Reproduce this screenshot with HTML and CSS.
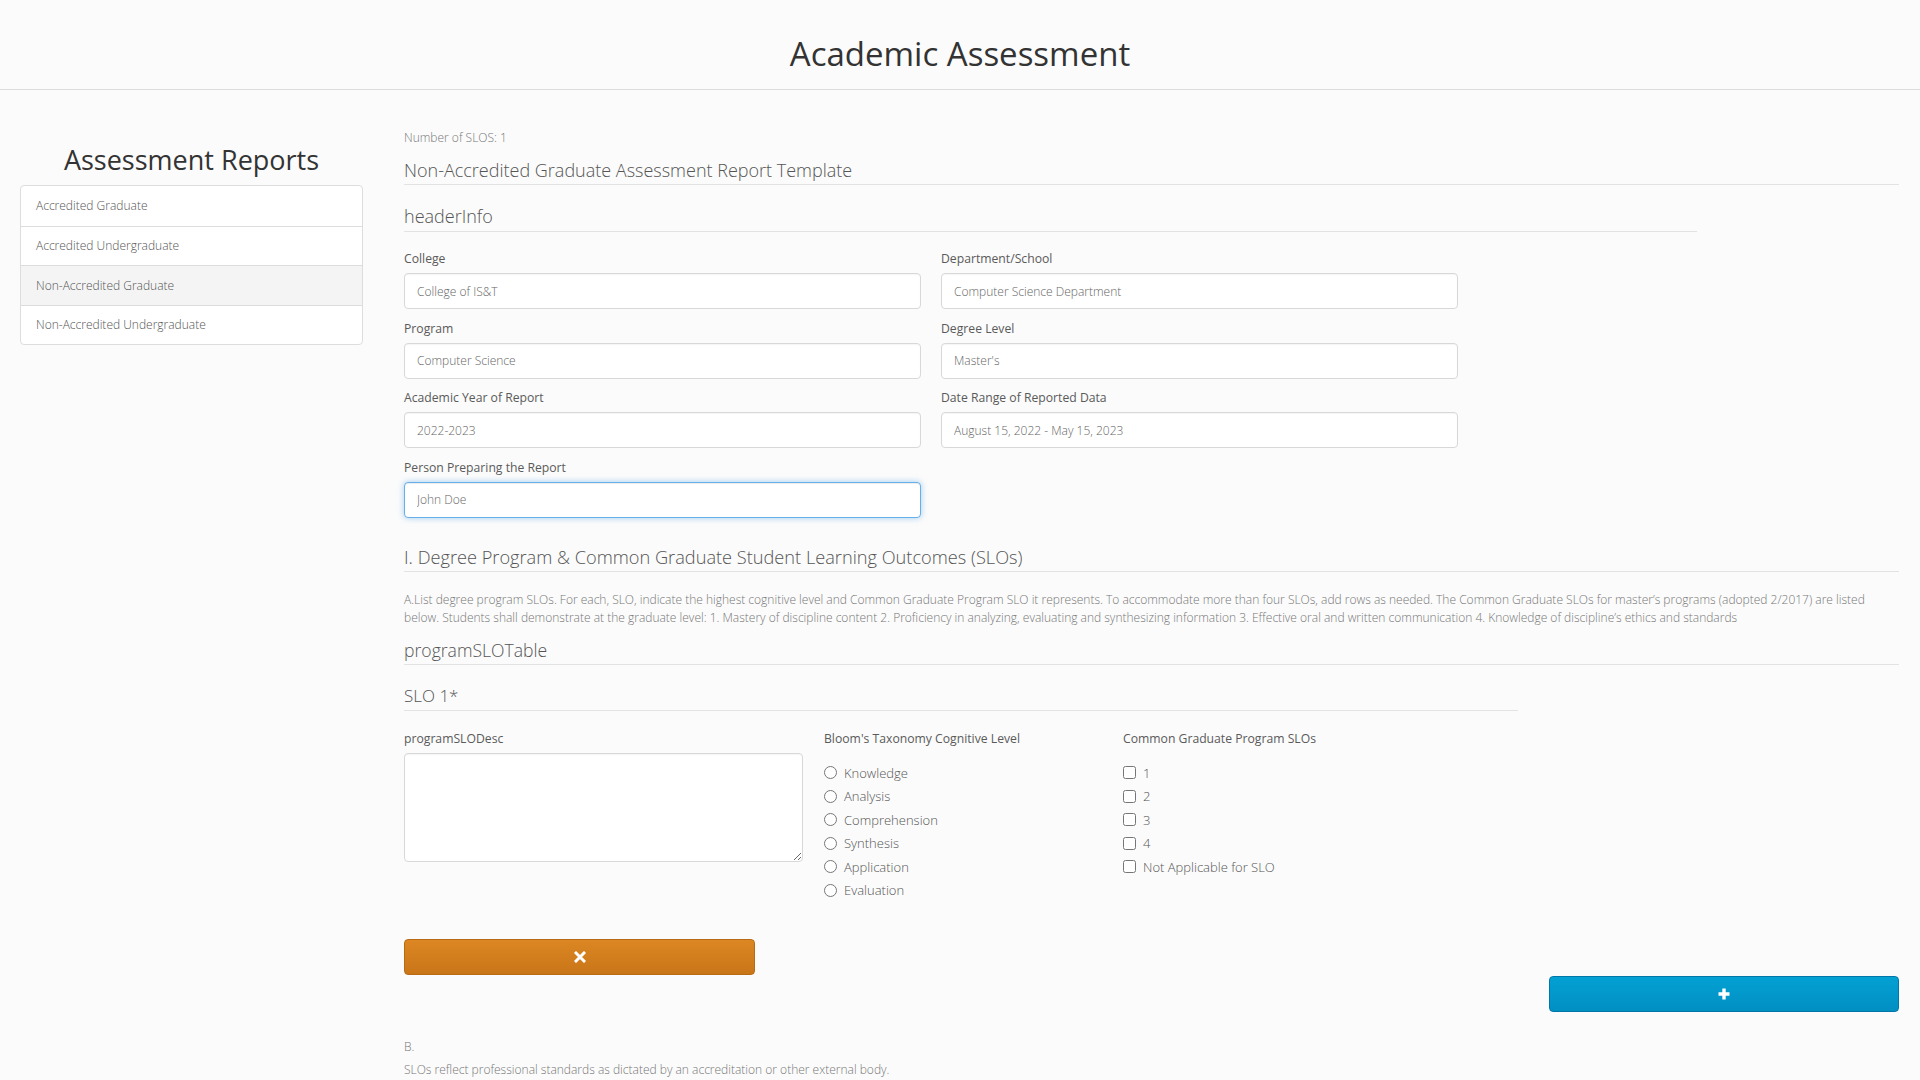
FILE: index.html
```html
<!DOCTYPE html>
<html lang="en">
<head>
<meta charset="utf-8">
<title>Academic Assessment</title>
<link rel="stylesheet" href="styles.css">
</head>
<body>
<header class="top-header">
  <h1 class="app-title">Academic Assessment</h1>
</header>
<div class="layout">
  <aside class="sidebar">
    <h2 class="sidebar-title">Assessment Reports</h2>
    <ul class="list-group">
      <li class="list-item">Accredited Graduate</li>
      <li class="list-item">Accredited Undergraduate</li>
      <li class="list-item active">Non-Accredited Graduate</li>
      <li class="list-item">Non-Accredited Undergraduate</li>
    </ul>
  </aside>
  <main class="main">
    <p class="slo-count">Number of SLOS: 1</p>
    <h3 class="section-title">Non-Accredited Graduate Assessment Report Template</h3>
    <section class="header-info">
      <h3 class="section-title sub">headerInfo</h3>
      <div class="form-grid">
        <div class="form-group">
          <label class="field-label">College</label>
          <input class="form-control" type="text" value="College of IS&amp;T">
        </div>
        <div class="form-group">
          <label class="field-label">Department/School</label>
          <input class="form-control" type="text" value="Computer Science Department">
        </div>
        <div class="form-group">
          <label class="field-label">Program</label>
          <input class="form-control" type="text" value="Computer Science">
        </div>
        <div class="form-group">
          <label class="field-label">Degree Level</label>
          <input class="form-control" type="text" value="Master's">
        </div>
        <div class="form-group">
          <label class="field-label">Academic Year of Report</label>
          <input class="form-control" type="text" value="2022-2023">
        </div>
        <div class="form-group">
          <label class="field-label">Date Range of Reported Data</label>
          <input class="form-control" type="text" value="August 15, 2022 - May 15, 2023">
        </div>
        <div class="form-group">
          <label class="field-label">Person Preparing the Report</label>
          <input class="form-control is-focus" type="text" value="John Doe">
        </div>
      </div>
    </section>

    <h3 class="section-title degree">I. Degree Program &amp; Common Graduate Student Learning Outcomes (SLOs)</h3>
    <p class="help-text">A.List degree program SLOs. For each, SLO, indicate the highest cognitive level and Common Graduate Program SLO it represents. To accommodate more than four SLOs, add rows as needed. The Common Graduate SLOs for master’s programs (adopted 2/2017) are listed below. Students shall demonstrate at the graduate level: 1. Mastery of discipline content 2. Proficiency in analyzing, evaluating and synthesizing information 3. Effective oral and written communication 4. Knowledge of discipline’s ethics and standards</p>

    <h3 class="section-title table-title">programSLOTable</h3>
    <section class="slo-block">
      <h3 class="section-title slo-title">SLO 1*</h3>
      <div class="slo-grid">
        <div class="slo-col">
          <label class="field-label">programSLODesc</label>
          <textarea class="form-control slo-desc"></textarea>
        </div>
        <div class="slo-col">
          <label class="field-label">Bloom's Taxonomy Cognitive Level</label>
          <div class="choice-list">
            <label class="choice"><input type="radio" name="bloom"> Knowledge</label>
            <label class="choice"><input type="radio" name="bloom"> Analysis</label>
            <label class="choice"><input type="radio" name="bloom"> Comprehension</label>
            <label class="choice"><input type="radio" name="bloom"> Synthesis</label>
            <label class="choice"><input type="radio" name="bloom"> Application</label>
            <label class="choice"><input type="radio" name="bloom"> Evaluation</label>
          </div>
        </div>
        <div class="slo-col">
          <label class="field-label">Common Graduate Program SLOs</label>
          <div class="choice-list">
            <label class="choice"><input type="checkbox"> 1</label>
            <label class="choice"><input type="checkbox"> 2</label>
            <label class="choice"><input type="checkbox"> 3</label>
            <label class="choice"><input type="checkbox"> 4</label>
            <label class="choice"><input type="checkbox"> Not Applicable for SLO</label>
          </div>
        </div>
      </div>
      <button class="btn btn-remove" type="button" aria-label="Remove">
        <svg width="12" height="12" viewBox="0 0 12 12"><path d="M2 2 L10 10 M10 2 L2 10" stroke="#fff" stroke-width="3" stroke-linecap="square"/></svg>
      </button>
    </section>
    <div class="add-row">
      <button class="btn btn-add" type="button" aria-label="Add">
        <svg width="12" height="12" viewBox="0 0 12 12"><path d="M6 0.5 V11.5 M0.5 6 H11.5" stroke="#fff" stroke-width="3.4"/></svg>
      </button>
    </div>
    <p class="help-text b-label">B.</p>
    <p class="help-text b-text">SLOs reflect professional standards as dictated by an accreditation or other external body.</p>
  </main>
</div>
</body>
</html>
```
FILE: styles.css
```css
* { box-sizing: border-box; }
html, body { margin: 0; padding: 0; }
body {
  background: #fbfbfb;
  font-family: "Open Sans", "Noto Sans", sans-serif;
  color: #555;
  height: 1080px;
  overflow: hidden;
}
.top-header {
  height: 90px;
  border-bottom: 1px solid #dcdcdc;
  display: flex;
  align-items: center;
  justify-content: center;
}
.app-title {
  margin: 0;
  font-size: 33px;
  font-weight: 400;
  color: #333;
  line-height: 40px;
  padding-top: 19px;
}
.layout {
  display: flex;
  padding: 0 21px 0 20px;
}
.sidebar {
  width: 343px;
  flex: none;
  padding-top: 51px;
}
.sidebar-title {
  margin: 0 0 6px;
  text-align: center;
  font-size: 27px;
  font-weight: 400;
  line-height: 38px;
  color: #333;
}
.list-group {
  list-style: none;
  margin: 0;
  padding: 0;
  background: #fff;
  border: 1px solid #ddd;
  border-radius: 4px;
}
.list-item {
  height: 39.5px;
  padding: 0 15px;
  display: flex;
  align-items: center;
  font-size: 12px;
  font-weight: 300;
  color: #555;
  border-top: 1px solid #ddd;
}
.list-item:first-child { border-top: 0; }
.list-item.active { background: #f4f4f4; }
.main {
  flex: 1;
  margin-left: 41px;
  padding-top: 39px;
}
.slo-count {
  margin: 0 0 12px;
  font-size: 12px;
  font-weight: 300;
  line-height: 18px;
  color: #777;
}
.section-title {
  margin: 0;
  font-size: 18px;
  font-weight: 300;
  line-height: 22px;
  padding-bottom: 3px;
  color: #555;
  border-bottom: 1px solid #e3e3e3;
}
.header-info { width: 1293px; margin-top: 20px; }
.section-title.sub { padding-bottom: 4px; }
.form-grid {
  margin-top: 18px;
  display: grid;
  grid-template-columns: 517px 517px;
  column-gap: 20px;
}
.form-group { margin-bottom: 10.5px; }
.field-label {
  display: block;
  font-size: 12.2px;
  line-height: 18px;
  margin-bottom: 5px;
  color: #5a5a5a;
}
.form-control {
  display: block;
  width: 100%;
  height: 36px;
  padding: 6px 12px;
  font-family: inherit;
  font-size: 12px;
  font-weight: 300;
  color: #666;
  background: #fff;
  border: 1px solid #d8d8d8;
  border-radius: 4px;
  box-shadow: inset 0 1px 1px rgba(0,0,0,.04);
}
.form-control.is-focus {
  border-color: #66afe9;
  box-shadow: inset 0 1px 1px rgba(0,0,0,.075), 0 0 6px rgba(102,175,233,.6);
  outline: 0;
}
.section-title.degree { margin-top: 18px; font-size: 18.2px; }
.help-text {
  margin: 19px 0 0;
  font-size: 12px;
  font-weight: 300;
  line-height: 18px;
  color: #777;
}
.section-title.table-title { margin-top: 12px; font-size: 17.6px; }
.slo-block { width: 1114px; margin-top: 20px; }
.section-title.slo-title { font-size: 17px; }
.slo-grid {
  margin-top: 19px;
  display: grid;
  grid-template-columns: 399px 278px auto;
  column-gap: 21px;
}
.field-label + .slo-desc { margin-top: 1px; }
.slo-desc {
  height: 109px;
  resize: vertical;
}
.choice-list {
  margin-top: 13px;
  display: flex;
  flex-direction: column;
}
.choice {
  display: flex;
  align-items: center;
  height: 23.5px;
  font-size: 13px;
  font-weight: 300;
  color: #555;
}
.choice input {
  margin: 0 7px 0 0;
  width: 13px;
  height: 13px;
}
.btn {
  display: flex;
  align-items: center;
  justify-content: center;
  height: 36px;
  border-radius: 4px;
  cursor: pointer;
  padding: 0;
}
.btn-remove {
  margin-top: 37px;
  width: 351px;
  background: linear-gradient(#dc8723, #c97619);
  border: 1px solid #b86a14;
}
.add-row {
  display: flex;
  justify-content: flex-end;
  margin-top: 1px;
}
.btn-add {
  width: 350px;
  background: linear-gradient(#03a0d3, #028fc2);
  border: 1px solid #0077a8;
}
.b-label { margin-top: 26px; }
.b-text { margin-top: 5px; }
```
